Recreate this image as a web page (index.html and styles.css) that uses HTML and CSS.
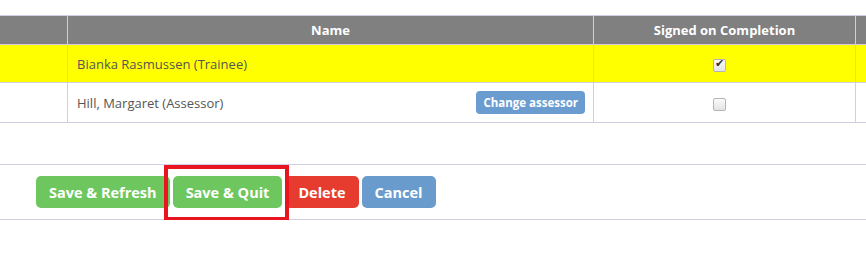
FILE: index.html
```html
<!DOCTYPE html>
<html lang="en">
<head>
    <meta charset="UTF-8">
    <meta name="viewport" content="width=device-width, initial-scale=1.0">
    <title>Sign Off</title>
    <link rel="stylesheet" href="styles.css">
</head>
<body>
    <div class="grid-wrap">
        <table class="grid">
            <colgroup>
                <col class="col-select">
                <col class="col-name">
                <col class="col-signed">
                <col class="col-extra">
            </colgroup>
            <thead>
                <tr>
                    <th></th>
                    <th>Name</th>
                    <th>Signed on Completion</th>
                    <th></th>
                </tr>
            </thead>
            <tbody>
                <tr class="row-highlight">
                    <td></td>
                    <td class="name-cell">Bianka Rasmussen (Trainee)</td>
                    <td class="check-cell"><input type="checkbox" checked></td>
                    <td></td>
                </tr>
                <tr class="row-assessor">
                    <td></td>
                    <td class="name-cell">
                        <div class="name-line">
                            <span>Hill, Margaret (Assessor)</span>
                            <button class="btn-small">Change assessor</button>
                        </div>
                    </td>
                    <td class="check-cell"><input type="checkbox"></td>
                    <td></td>
                </tr>
            </tbody>
        </table>
    </div>

    <div class="actions">
        <button class="btn btn-green">Save &amp; Refresh</button>
        <button class="btn btn-green btn-marked">Save &amp; Quit</button>
        <button class="btn btn-red">Delete</button>
        <button class="btn btn-blue">Cancel</button>
    </div>
</body>
</html>
```

FILE: styles.css
```css
body {
    margin: 0;
    font-family: 'Open Sans', Arial, sans-serif;
    background: #fff;
    color: #555;
    overflow: hidden;
}

.grid-wrap {
    padding-top: 15px;
    overflow: hidden;
}

.grid {
    border-collapse: collapse;
    table-layout: fixed;
    width: 921px;
    margin-left: -1px;
}

.col-select { width: 68px; }
.col-name { width: 526px; }
.col-signed { width: 262px; }
.col-extra { width: 65px; }

.grid th,
.grid td {
    border: 1px solid #d0cee0;
    padding: 0;
}

.grid th {
    background: #808080;
    color: #fff;
    font-size: 13px;
    font-weight: 700;
    height: 28px;
    text-align: center;
}

.grid td {
    font-size: 13px;
    vertical-align: middle;
}

.row-highlight td {
    background: #ffff00;
    height: 37px;
}

.row-assessor td {
    height: 39px;
}

.name-cell {
    padding-left: 9px !important;
    padding-right: 8px !important;
}

.name-line {
    display: flex;
    align-items: center;
    justify-content: space-between;
}

.check-cell {
    text-align: center;
}

.check-cell input {
    appearance: none;
    -webkit-appearance: none;
    width: 13px;
    height: 13px;
    margin: 0 0 0 -10px;
    border: 1px solid #b4b4b4;
    border-radius: 2px;
    background: linear-gradient(#fafafa, #e4e4e4);
    vertical-align: middle;
    position: relative;
}

.check-cell input:checked::after {
    content: "\2714";
    position: absolute;
    left: 1px;
    top: -3px;
    font-size: 11px;
    color: #333;
    font-family: 'DejaVu Sans', sans-serif;
}

.btn-small {
    font-family: inherit;
    font-size: 11.5px;
    font-weight: 700;
    color: #fff;
    background: #6a9ccf;
    border: none;
    border-radius: 4px;
    height: 23px;
    padding: 0 7px;
}

.actions {
    margin-top: 41px;
    border-top: 1px solid #d0cee0;
    border-bottom: 1px solid #d0cee0;
    height: 54px;
    padding-left: 36px;
    display: flex;
    align-items: flex-start;
    gap: 3px;
}

.btn {
    font-family: inherit;
    font-size: 14.5px;
    font-weight: 700;
    color: #fff;
    border: none;
    border-radius: 5px;
    height: 32px;
    padding: 0 13px;
    margin-top: 11px;
}

.btn-green { background: #6dc75e; }
.btn-red { background: #e53c2f; }
.btn-blue { background: #699ccd; }

.btn-marked {
    position: relative;
}

/* annotation frame drawn over the button */
.btn-marked::after {
    content: "";
    position: absolute;
    top: -11px;
    bottom: -13px;
    left: -9px;
    right: -7px;
    border: 4px solid #e8141f;
    pointer-events: none;
}
```
